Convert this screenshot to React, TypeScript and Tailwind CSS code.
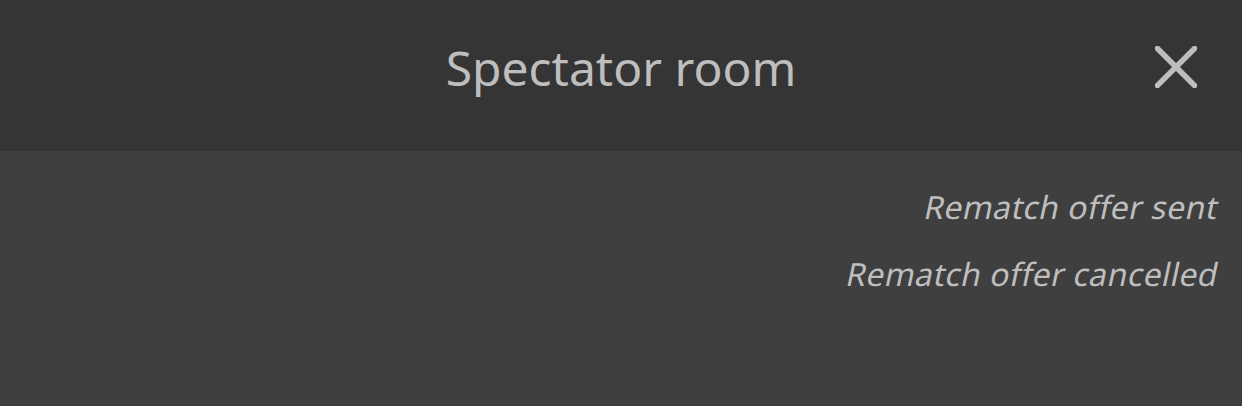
export default function App() {
  const messages = ["Rematch offer sent", "Rematch offer cancelled"];

  return (
    <div className="flex h-[406px] w-[1242px] flex-col bg-[#3f3f3f] font-['Noto_Sans',sans-serif] text-[#bebebe]">
      <header className="relative flex h-[151px] shrink-0 items-start justify-center bg-[#353535]">
        <h1 className="mt-[35px] text-[48px] leading-[66px]">Spectator room</h1>
        <button className="absolute top-[46px] right-[45px] h-[42px] w-[42px]" aria-label="Close">
          <svg viewBox="0 0 42 42" className="h-full w-full">
            <path d="M2.5 2.5L39.5 39.5M39.5 2.5L2.5 39.5" stroke="#bebebe" strokeWidth="5.5" strokeLinecap="square" />
          </svg>
        </button>
      </header>
      <div className="flex flex-col items-end pt-[22px] pr-[30px]">
        {messages.map((m) => (
          <p key={m} className="inline-block origin-bottom -skew-x-12 text-[32px] leading-[67px] tracking-[0.4px]">
            {m}
          </p>
        ))}
      </div>
    </div>
  );
}
